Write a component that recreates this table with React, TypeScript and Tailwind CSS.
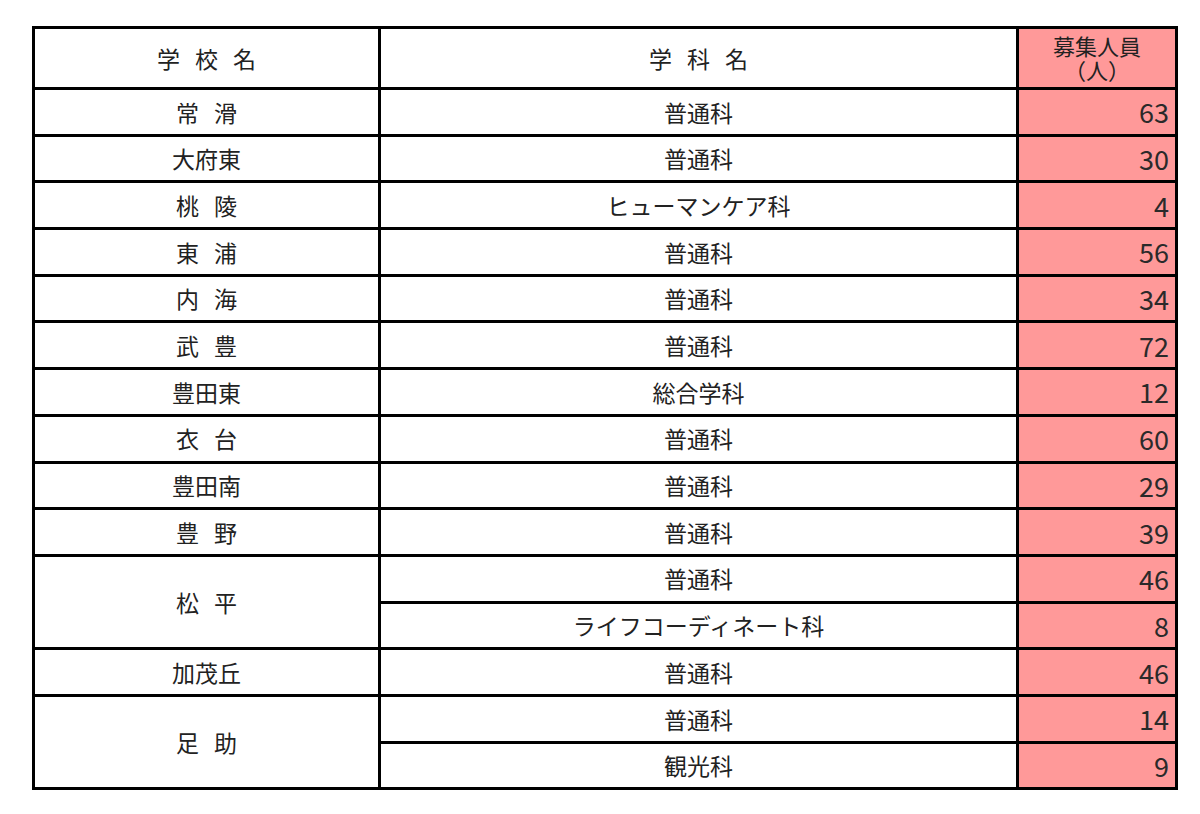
import React from 'react';

type Row = { school?: string; span?: number; dept: string; count: number };

const rows: Row[] = [
  { school: '常 滑', dept: '普通科', count: 63 },
  { school: '大府東', dept: '普通科', count: 30 },
  { school: '桃 陵', dept: 'ヒューマンケア科', count: 4 },
  { school: '東 浦', dept: '普通科', count: 56 },
  { school: '内 海', dept: '普通科', count: 34 },
  { school: '武 豊', dept: '普通科', count: 72 },
  { school: '豊田東', dept: '総合学科', count: 12 },
  { school: '衣 台', dept: '普通科', count: 60 },
  { school: '豊田南', dept: '普通科', count: 29 },
  { school: '豊 野', dept: '普通科', count: 39 },
  { school: '松 平', span: 2, dept: '普通科', count: 46 },
  { dept: 'ライフコーディネート科', count: 8 },
  { school: '加茂丘', dept: '普通科', count: 46 },
  { school: '足 助', span: 2, dept: '普通科', count: 14 },
  { dept: '観光科', count: 9 },
];

// names written with a space get spread out
const Spaced = ({ text }: { text: string }) => {
  if (!text.includes(' ')) return <span>{text}</span>;
  const chars = text.split(' ');
  return (
    <span className="inline-flex justify-center gap-[15px]">
      {chars.map((c, i) => (
        <span key={i}>{c}</span>
      ))}
    </span>
  );
};

export default function App() {
  return (
    <div
      className="w-[1200px] h-[814px] bg-white pt-[26px] pl-[32px] text-[#222]"
      style={{ fontFamily: '"Noto Sans CJK JP", "Noto Sans", sans-serif' }}
    >
      <table className="w-[1143px] border-collapse border-[3px] border-black table-fixed">
        <colgroup>
          <col className="w-[346px]" />
          <col className="w-[638px]" />
          <col className="w-[159px]" />
        </colgroup>
        <thead>
          <tr className="h-[61px]">
            <th className="border-[3px] border-black font-normal text-[23px] text-center p-0">
              <Spaced text="学 校 名" />
            </th>
            <th className="border-[3px] border-black font-normal text-[23px] text-center p-0">
              <Spaced text="学 科 名" />
            </th>
            <th className="border-[3px] border-black bg-[#ff9999] font-normal text-[22px] leading-[24px] text-center p-0 align-top pt-[4px]">
              <div>募集人員</div>
              <div>（人）</div>
            </th>
          </tr>
        </thead>
        <tbody>
          {rows.map((r, i) => (
            <tr key={i} className="h-[46.7px]">
              {r.school && (
                <td
                  rowSpan={r.span}
                  className="border-[3px] border-black text-center text-[23px] p-0"
                >
                  <Spaced text={r.school} />
                </td>
              )}
              <td className="border-[3px] border-black text-center text-[23px] p-0">{r.dept}</td>
              <td className="border-[3px] border-black bg-[#ff9999] text-right text-[27px] leading-none pr-[6px] py-0 text-[#2a2a2a]">
                {r.count}
              </td>
            </tr>
          ))}
        </tbody>
      </table>
    </div>
  );
}
